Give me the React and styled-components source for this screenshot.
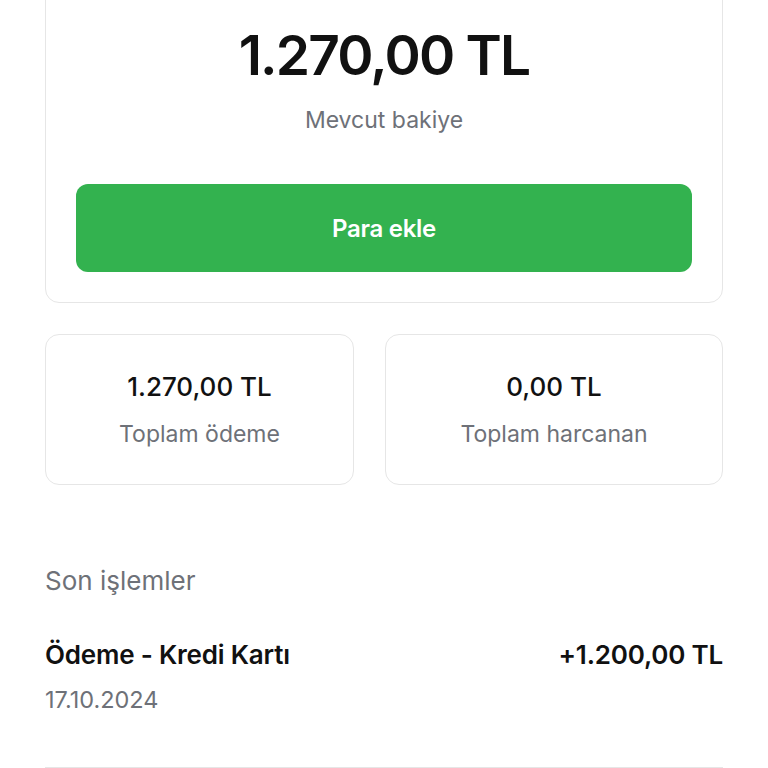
import React from "react";
import styled, { createGlobalStyle } from "styled-components";

const GlobalStyle = createGlobalStyle`
  body {
    margin: 0;
    background: #ffffff;
    font-family: Inter, "Noto Sans", "Liberation Sans", sans-serif;
    color: #111111;
  }
`;

const Page = styled.div`
  margin-top: -39px;
  padding: 0 45px;
  display: flex;
  flex-direction: column;
`;

const BalanceCard = styled.div`
  border: 1px solid #e6e6e6;
  border-radius: 14px;
  padding: 57px 30px 30px;
  display: flex;
  flex-direction: column;
  align-items: center;
`;

const BigAmount = styled.div`
  font-size: 55px;
  line-height: 72px;
  font-weight: 600;
  letter-spacing: -1.8px;
  color: #111111;
`;

const Caption = styled.div`
  font-size: 23px;
  line-height: 28px;
  color: #6e7178;
  margin-top: ${(p) => p.$gap || 0}px;
`;

const AddButton = styled.button`
  margin-top: 50px;
  width: 100%;
  height: 88px;
  border: none;
  border-radius: 12px;
  background: #33b24f;
  color: #ffffff;
  font-family: inherit;
  font-size: 24px;
  font-weight: 600;
  letter-spacing: -0.3px;
`;

const StatsRow = styled.div`
  margin-top: 31px;
  display: grid;
  grid-template-columns: 309px 1fr;
  gap: 31px;
`;

const StatCard = styled.div`
  border: 1px solid #e6e6e6;
  border-radius: 14px;
  height: 151px;
  box-sizing: border-box;
  display: flex;
  flex-direction: column;
  align-items: center;
  justify-content: center;
  gap: 18px;
`;

const StatValue = styled.div`
  font-size: 26px;
  line-height: 30px;
  font-weight: 500;
`;

const SectionTitle = styled.div`
  margin-top: 80px;
  font-size: 26px;
  line-height: 32px;
  color: #6e7178;
`;

const TxRow = styled.div`
  margin-top: 42px;
  display: flex;
  justify-content: space-between;
  align-items: baseline;
`;

const TxTitle = styled.div`
  font-size: 26px;
  line-height: 32px;
  font-weight: 600;
  letter-spacing: -0.2px;
`;

const TxDate = styled.div`
  margin-top: 15px;
  font-size: 23.5px;
  line-height: 28px;
  color: #6e7178;
`;

const Divider = styled.div`
  margin-top: 53px;
  height: 1px;
  background: #e6e6e6;
`;

export default function App() {
  return (
    <>
      <GlobalStyle />
      <Page>
        <BalanceCard>
          <BigAmount>1.270,00 TL</BigAmount>
          <Caption $gap={15}>Mevcut bakiye</Caption>
          <AddButton>Para ekle</AddButton>
        </BalanceCard>
        <StatsRow>
          <StatCard>
            <StatValue>1.270,00 TL</StatValue>
            <Caption>Toplam ödeme</Caption>
          </StatCard>
          <StatCard>
            <StatValue>0,00 TL</StatValue>
            <Caption>Toplam harcanan</Caption>
          </StatCard>
        </StatsRow>
        <SectionTitle>Son işlemler</SectionTitle>
        <TxRow>
          <TxTitle>Ödeme - Kredi Kartı</TxTitle>
          <TxTitle>+1.200,00 TL</TxTitle>
        </TxRow>
        <TxDate>17.10.2024</TxDate>
        <Divider />
      </Page>
    </>
  );
}
